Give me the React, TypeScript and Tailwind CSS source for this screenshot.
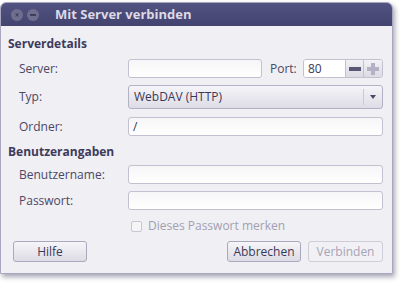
const FONT = { fontFamily: '"Open Sans", "DejaVu Sans", sans-serif' };

function Field({ className = '', children }: { className?: string; children?: React.ReactNode }) {
  return (
    <div
      className={`h-[19px] rounded-[3px] border border-[#c3c0d2] bg-gradient-to-b from-[#f6f6f8] to-white flex items-center px-[4px] text-[12px] text-[#3a3850] ${className}`}
    >
      {children}
    </div>
  );
}

function Button({ label, disabled = false, className = '' }: { label: string; disabled?: boolean; className?: string }) {
  return (
    <div
      className={`h-[21px] rounded-[3px] border flex items-center justify-center text-[12px] ${
        disabled
          ? 'border-[#cfcdd9] bg-[#f1f0f4] text-[#a6a4b6]'
          : 'border-[#aaa8bd] bg-gradient-to-b from-[#f6f5f8] to-[#dddce5] text-[#3b3957]'
      } ${className}`}
    >
      {label}
    </div>
  );
}

function Row({ label, children, className = '' }: { label: string; children: React.ReactNode; className?: string }) {
  return (
    <div className={`flex items-center ${className}`}>
      <span className="w-[120px] pl-[11px] text-[12px] text-[#4a4866]">{label}</span>
      {children}
    </div>
  );
}

export default function App() {
  return (
    <div className="w-[400px] h-[283px] bg-white pt-[2px]" style={FONT}>
      <div className="w-[393px] h-[272px] rounded-t-[6px] flex flex-col shadow-[2px_3px_5px_rgba(60,60,90,0.45)] border border-[#a9a7c0]">
        {/* Title bar */}
        <div className="h-[23px] rounded-t-[5px] bg-gradient-to-b from-[#535381] to-[#434370] flex items-center">
          <div className="flex items-center gap-[4px] pl-[10px]">
            <div className="w-[12px] h-[12px] rounded-full bg-[#6f6e8e] flex items-center justify-center text-[8px] leading-none text-[#3e3d5c] font-bold">×</div>
            <div className="w-[12px] h-[12px] rounded-full bg-[#6f6e8e] flex items-center justify-center">
              <div className="w-[6px] h-[2px] bg-[#3e3d5c]" />
            </div>
          </div>
          <span className="ml-[16px] text-[13px] font-bold text-[#dcdae6]">Mit Server verbinden</span>
        </div>

        {/* Body */}
        <div className="flex-1 bg-[#f0eff3] pl-[7px] pr-[9px] flex flex-col">
          <div className="mt-[10px] text-[12px] font-bold text-[#3d3b5c] leading-[16px]">Serverdetails</div>

          <Row label="Server:" className="mt-[7px]">
            <Field className="w-[134px]" />
            <span className="ml-[8px] w-[33px] text-[12px] text-[#4a4866]">Port:</span>
            <div className="flex h-[19px] rounded-[3px] border border-[#c3c0d2] overflow-hidden">
              <div className="w-[41px] bg-white flex items-center px-[4px] text-[12px] text-[#3a3850]">80</div>
              <div className="w-[18px] bg-gradient-to-b from-[#f2f1f5] to-[#dcdbe4] border-l border-[#c3c0d2] flex items-center justify-center">
                <div className="w-[12px] h-[4px] bg-[#595778]" />
              </div>
              <div className="w-[19px] bg-gradient-to-b from-[#f2f1f5] to-[#dcdbe4] border-l border-[#c3c0d2] flex items-center justify-center relative">
                <div className="w-[12px] h-[4px] bg-[#b3b1c3]" />
                <div className="absolute w-[4px] h-[12px] bg-[#b3b1c3]" />
              </div>
            </div>
          </Row>

          <Row label="Typ:" className="mt-[7px]">
            <div className="w-[255px] h-[24px] rounded-[3px] border border-[#b3b1c6] bg-gradient-to-b from-[#f5f4f8] to-[#dedde6] flex items-center">
              <span className="flex-1 pl-[5px] text-[12px] text-[#3b3957]">WebDAV (HTTP)</span>
              <div className="w-[19px] h-[16px] border-l border-[#cac8d6] flex items-center justify-center">
                <div className="w-0 h-0 border-l-[3px] border-r-[3px] border-t-[4px] border-l-transparent border-r-transparent border-t-[#4a4866]" />
              </div>
            </div>
          </Row>

          <Row label="Ordner:" className="mt-[8px]">
            <Field className="w-[255px]">/</Field>
          </Row>

          <div className="mt-[8px] text-[12px] font-bold text-[#3d3b5c] leading-[16px]">Benutzerangaben</div>

          <Row label="Benutzername:" className="mt-[5px]">
            <Field className="w-[255px]" />
          </Row>
          <Row label="Passwort:" className="mt-[7px]">
            <Field className="w-[255px]" />
          </Row>

          <div className="flex items-center mt-[7px] pl-[123px]">
            <div className="w-[11px] h-[11px] rounded-[2px] border border-[#c9c7d4] bg-[#f5f5f7]" />
            <span className="ml-[6px] text-[12px] text-[#a19fb2]">Dieses Passwort merken</span>
          </div>

          <div className="flex items-center mt-[6px] pl-[5px]">
            <Button label="Hilfe" className="w-[74px]" />
            <div className="flex-1" />
            <Button label="Abbrechen" className="w-[74px] font-medium" />
            <Button label="Verbinden" disabled className="w-[75px] ml-[7px]" />
          </div>
        </div>
      </div>
    </div>
  );
}
